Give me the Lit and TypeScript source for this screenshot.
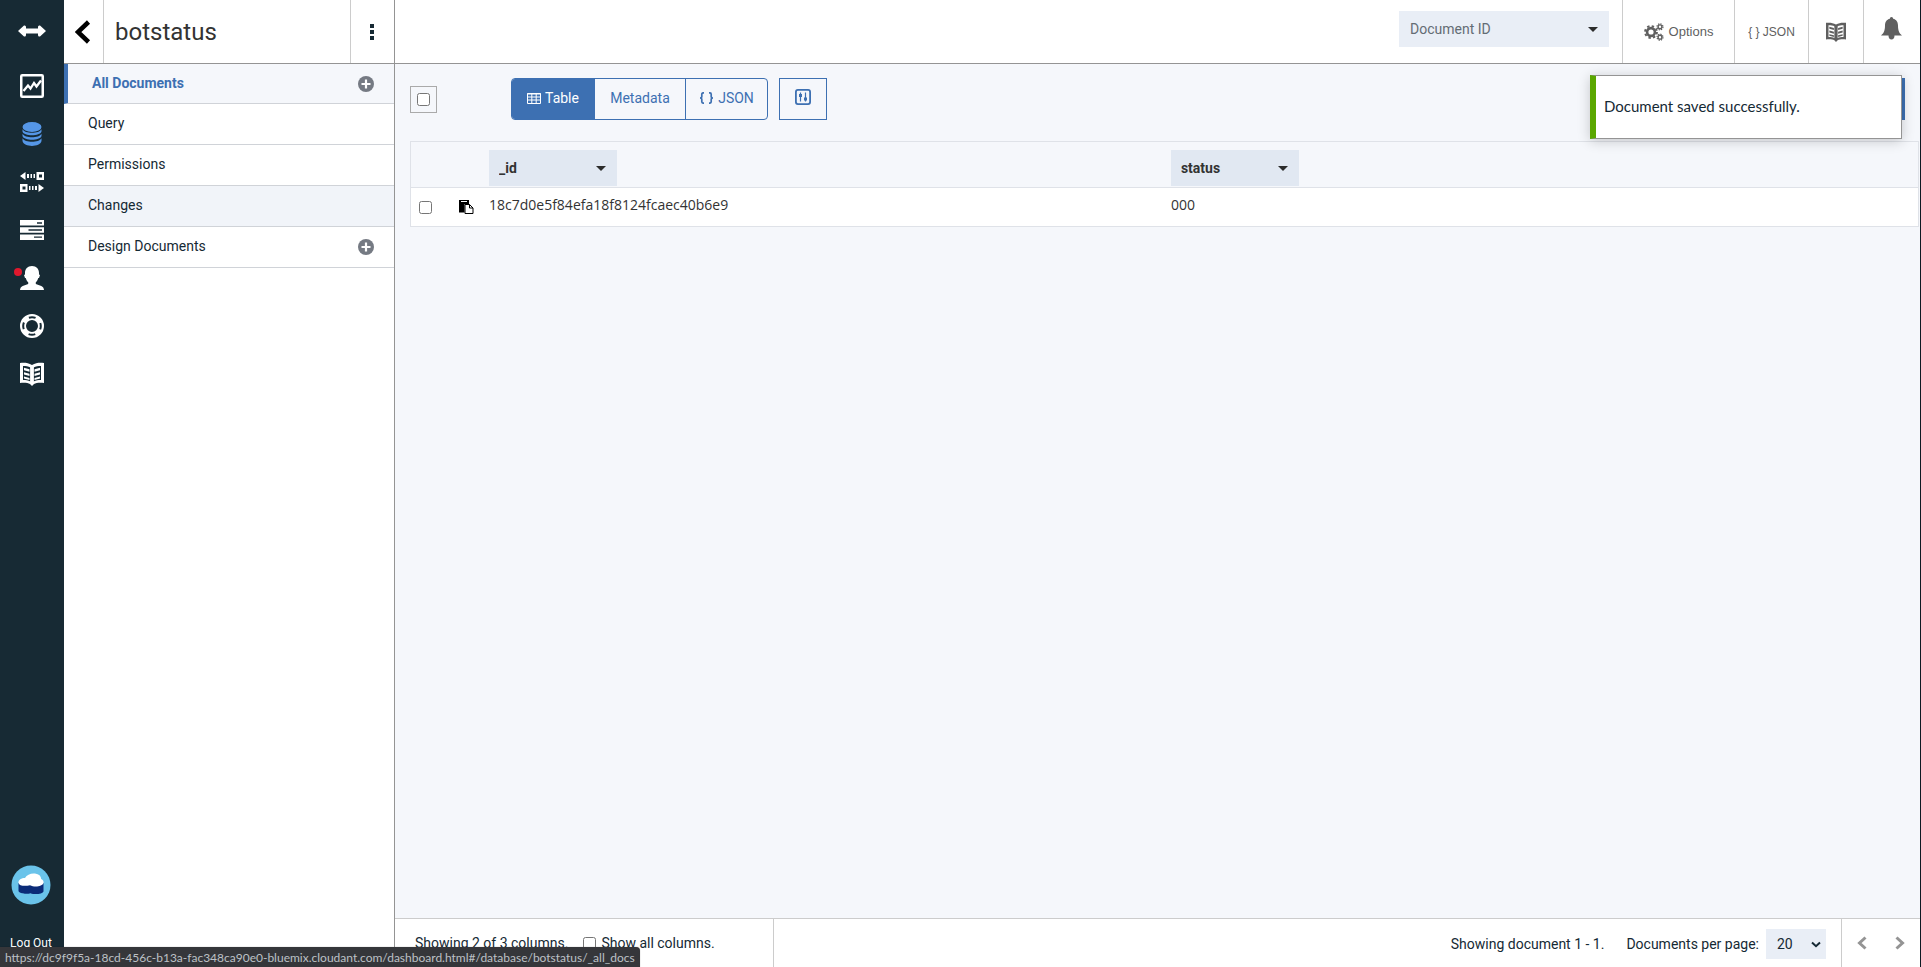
import { LitElement, html, css, svg } from 'lit';
import { customElement } from 'lit/decorators.js';
import { classMap } from 'lit/directives/class-map.js';

const bookPaths = svg`
  <path fill-rule="evenodd" d="M0 1 C4 .6 8 .6 12 3 C16 .6 20 .6 24 1 V21 C20 20.6 16 20.8 14 22 L12 24 L10 22 C8 20.8 4 20.6 0 21Z
  M3 4V18C6 18 8 18.2 10.500 19.500V5.400C8 4.200 6 4 3 4Z M21 4C18 4 16 4.200 13.500 5.400V19.500C16 18.200 18 18 21 18Z"/>
  <path d="M4 5.800l5.500 1.500v2.400l-5.500-1.500zM4 10.200l5.500 1.500v2.400l-5.500-1.500zM4 14.600l5.500 1.300v2l-5.500-1.300zM20 5.800l-5.500 1.500v2.400l5.500-1.500zM20 10.200l-5.500 1.500v2.400l5.500-1.500zM20 14.600l-5.500 1.300v2l5.500-1.300z"/>
  <path d="M10.200 4h3.600v17h-3.600z"/>`;

const icons = {
  expand: html`<svg width="28" height="24" viewBox="0 0 28 24"><path fill="#fff" d="M0 12 6 6.500Q8 6 8 8V9.500H20V8Q20 6 22 6.500L28 12 22 17.500Q20 18 20 16V14.500H8V16Q8 18 6 17.500Z"/></svg>`,
  chart: html`<svg width="24" height="24" viewBox="0 0 24 24" fill="none" stroke="#fff"><rect x="1.250" y="1.250" width="21.500" height="21.500" rx="1" stroke-width="2.500"/><path stroke-width="2.300" d="M3.500 17 8 11.500l2.500 3L14 9l2.500 3.500 4.500-6"/></svg>`,
  database: html`<svg width="20" height="24" viewBox="0 0 20 24"><ellipse cx="10" cy="5" rx="9.500" ry="5" fill="#5596e6"/><path fill="#5596e6" d="M.5 7.200C3 12 17 12 19.500 7.200V9.500C18 14.500 2 14.500.5 9.500ZM.5 11.700C3 16.500 17 16.500 19.500 11.700V14C18 19 2 19 .5 14ZM.5 16.200C3 21 17 21 19.500 16.200V19C18 25.500 2 25.500.5 19Z"/></svg>`,
  replication: html`<svg width="24" height="20" viewBox="0 0 24 20" fill="#fff"><path fill-rule="evenodd" d="M0 4 5.500 0V8ZM7 2h2v4H7zM10.500 2h1.500v4h-1.500zM13.500 2h1.500v4h-1.500zM16.500 0H24V8H16.500ZM19 2.500V5.500H22V2.500ZM24 16 18.500 12v8ZM15 14h2v4h-2zM12 14h1.500v4H12zM9 14h1.500v4H9zM0 12H7.500v8H0ZM2.500 14.500v3h3v-3Z"/></svg>`,
  tasks: html`<svg width="24" height="20" viewBox="0 0 24 20"><path fill="#fff" d="M0 0H24V5.500H0ZM0 7.200H24V12.700H0ZM0 14.400H24V20H0Z"/><path stroke="#172a34" stroke-width="1.300" d="M17 3h5M8.500 10H22M14 17.200h8"/></svg>`,
  user: html`<svg width="24" height="24" viewBox="0 0 24 24"><path fill="#fff" d="M12 0c4.500 0 7 3 7 7v1.500l1 .5-1 3h-.7c-.6 2-1.300 3.200-2.500 4.200V18l5.500 2c1.700.8 2.500 2.200 2.700 4H0c.2-1.800 1-3.200 2.700-4l5.500-2v-1.800C7 15.200 6.300 14 5.700 12H5L4 9l1-.5V7c0-4 2.500-7 7-7Z"/></svg>`,
  support: html`<svg width="24" height="24" viewBox="0 0 24 24" fill="none"><circle cx="12" cy="12" r="9" stroke="#fff" stroke-width="6"/><circle cx="12" cy="12" r="8.800" stroke="#172a34" stroke-width="2" stroke-dasharray="6.800 7.020" stroke-dashoffset="3.400"/></svg>`,
  docs: html`<svg width="24" height="24" viewBox="0 0 24 24" fill="#fff">${bookPaths}</svg>`,
  docsDark: html`<svg width="20" height="20" viewBox="0 0 24 24" fill="#5f5f5f">${bookPaths}</svg>`,
  logo: html`<svg width="40" height="40" viewBox="0 0 40 40"><circle cx="20" cy="20" r="19.500" fill="#6ac3ea"/><path fill="#0b2b78" d="M7.500 18V26c1 3 9 3.200 12 2.200 4 1.500 11.500 1.200 13-1.700V18Z"/><path fill="#fff" d="M7.500 18c-.3-3.500 3-5 6.500-5 2-3.500 6-5 10-4.500 4 .5 6 2.500 6.200 5.500 2 .8 2.600 2.300 2.300 4-1 3.500-9 4.500-13.500 2.200C14 21.500 8 21 7.500 18Z"/></svg>`,
  back: html`<svg width="16" height="24" viewBox="0 0 16 24"><path d="M13.500 2 3 12 13.500 22" fill="none" stroke="#000" stroke-width="4.500"/></svg>`,
  kebab: html`<svg width="6" height="16" viewBox="0 0 6 16"><path fill="#172a34" d="M1 0h4v4H1zM1 6h4v4H1zM1 12h4v4H1z"/></svg>`,
  plus: html`<svg width="16" height="16" viewBox="0 0 16 16"><circle cx="8" cy="8" r="8" fill="#757a83"/><path stroke="#fff" stroke-width="2.200" d="M8 3.500v9M3.500 8h9"/></svg>`,
  caret: html`<svg width="10" height="5" viewBox="0 0 10 5"><path fill="#2c2c2c" d="M0 0h10L5 5z"/></svg>`,
  gears: html`<svg width="20" height="18" viewBox="0 0 20 18" fill="none" stroke="#5f5f5f"><circle cx="7" cy="9" r="3.900" stroke-width="2.600"/><circle cx="7" cy="9" r="5.900" stroke-width="2" stroke-dasharray="2.400 2.234"/><circle cx="16" cy="3.800" r="1.900" stroke-width="1.400"/><circle cx="16" cy="3.800" r="3" stroke-width="1.200" stroke-dasharray="1.300 1.056"/><circle cx="16" cy="14.200" r="1.900" stroke-width="1.400"/><circle cx="16" cy="14.200" r="3" stroke-width="1.200" stroke-dasharray="1.300 1.056"/></svg>`,
  bell: html`<svg width="21" height="23" viewBox="0 0 21 23"><path fill="#5f5f5f" d="M10.500 0c1 0 1.600.7 1.600 1.800C15.500 2.500 17 5.300 17 8.500c0 5 1.200 7.700 4 10H13.500c0 2.500-1.200 4-3 4s-3-1.500-3-4H0c2.800-2.300 4-5 4-10 0-3.200 1.500-6 4.900-6.700C8.900.7 9.500 0 10.500 0Z"/></svg>`,
  grid: html`<svg width="14" height="11" viewBox="0 0 14 11"><path fill="none" stroke="currentColor" d="M.5.5h13v10H.5zM0 1h14M0 4h14M0 7h14M4.800 0v11M9.200 0v11"/></svg>`,
  braces: html`<svg width="15" height="12" viewBox="0 0 15 12"><path fill="none" stroke="currentColor" stroke-width="1.700" d="M5 .9H4Q2.800.9 2.800 2.200V4.500Q2.800 6 1 6 2.800 6 2.800 7.500V9.800Q2.800 11.100 4 11.100H5M10 .9h1Q12.200.9 12.200 2.200V4.500Q12.200 6 14 6 12.200 6 12.200 7.500V9.800Q12.200 11.100 11 11.100H10"/></svg>`,
  sliders: html`<svg width="16" height="16" viewBox="0 0 16 16"><rect x=".9" y=".9" width="14.200" height="14.200" rx="2" fill="none" stroke="#3d70b2" stroke-width="1.800"/><path stroke="#3d70b2" stroke-width="1.200" d="M5.500 3.500v9M10.500 3.500v9"/><path stroke="#3d70b2" stroke-width="3" d="M5.500 5v3M10.500 8.500v3"/></svg>`,
  clipboard: html`<svg width="15" height="14" viewBox="0 0 15 14"><path d="M0 0H10V4H5.500V12.500H0Z"/><path fill="#fff" d="M2 1h6v1H2z"/><path fill="#fff" stroke="#000" d="M6 4.500h4.500L14 8v5.500H6z"/><path fill="none" stroke="#000" d="M10.500 4.500V8H14"/></svg>`,
  prev: html`<svg width="10" height="14" viewBox="0 0 10 14"><path d="M8.500 1.500 2.500 7l6 5.500" fill="none" stroke="#949494" stroke-width="3"/></svg>`,
  next: html`<svg width="10" height="14" viewBox="0 0 10 14"><path d="M1.500 1.500 7.500 7l-6 5.500" fill="none" stroke="#949494" stroke-width="3"/></svg>`,
  chevron: html`<svg width="10" height="7" viewBox="0 0 10 7"><path d="M1 1.500 5 5.200 9 1.500" fill="none" stroke="#152934" stroke-width="2"/></svg>`,
};

const navLinks = [
  { icon: icons.chart, label: 'Monitoring' },
  { icon: icons.database, label: 'Databases' },
  { icon: icons.replication, label: 'Replication' },
  { icon: icons.tasks, label: 'Active Tasks' },
  { icon: icons.user, label: 'Account', alert: true },
  { icon: icons.support, label: 'Support' },
  { icon: icons.docs, label: 'Documentation' },
];

const sections = [
  { text: 'All Documents', active: true, add: true },
  { text: 'Query' },
  { text: 'Permissions' },
  { text: 'Changes', hover: true },
  { text: 'Design Documents', add: true },
];

const shared = css`
  *, *::before, *::after { box-sizing: border-box; }
  svg { display: block; flex: none; }
  a { color: inherit; text-decoration: none; }
  button, select, input { font: inherit; color: inherit; margin: 0; }
  button { border: 0; padding: 0; background: none; display: flex; align-items: center; justify-content: center; cursor: pointer; }
  .pick { display: grid; align-items: center; }
  .pick select, .pick svg { grid-area: 1 / 1; }
  .pick select { appearance: none; border: 0; border-radius: 0; width: 100%; height: 100%; background: #e9eef6; }
  .pick svg { justify-self: end; margin-right: 11px; pointer-events: none; }
`;

@customElement('side-nav')
export class SideNav extends LitElement {
  static styles = [shared, css`
    :host { display: flex; flex-direction: column; align-items: center; width: 64px; background: #172a34; color: #fff; font-size: 12px; }
    .toggle { height: 62px; width: 64px; }
    .links { display: flex; flex-direction: column; width: 100%; }
    .link { display: flex; align-items: center; justify-content: center; height: 48px; position: relative; }
    .alert::before { content: ''; position: absolute; left: 14px; top: 14px; width: 8px; height: 8px; border-radius: 50%; background: #e0182d; }
    .foot { margin-top: auto; display: flex; flex-direction: column; align-items: center; gap: 30px; padding: 0 2px 16px 0; line-height: 16px; }
  `];
  render() {
    return html`
      <button class="toggle" aria-label="Expand menu">${icons.expand}</button>
      <nav class="links">
        ${navLinks.map(l => html`<a class=${classMap({ link: true, alert: !!l.alert })} href="#" aria-label=${l.label}>${l.icon}</a>`)}
      </nav>
      <div class="foot">${icons.logo}<a href="#">Log Out</a></div>`;
  }
}

@customElement('database-panel')
export class DatabasePanel extends LitElement {
  static styles = [shared, css`
    :host { display: block; width: 331px; background: #fff; border-right: 1px solid #949494; color: #152934; }
    .head { display: flex; height: 64px; border-bottom: 1px solid #949494; }
    .back { width: 40px; padding-right: 1px; border-right: 1px solid #ccc; }
    .name { flex: 1; margin: 0; padding-left: 11px; font-size: 24px; font-weight: 400; line-height: 64px; color: #333; }
    .more { width: 44px; padding-right: 2px; border-left: 1px solid #ccc; }
    .list { list-style: none; margin: 0; padding: 0; }
    .item { display: flex; align-items: center; justify-content: space-between; height: 41px; padding: 0 20px 0 24px; border-bottom: 1px solid #d0d3d8; line-height: 20px; }
    .item a { padding-bottom: 2px; }
    .hover { background: #f1f4f9; }
    .active { height: 40px; background: #f5f7fb; color: #3d70b2; font-weight: 700; border-left: 4px solid #3d70b2; }
  `];
  render() {
    return html`
      <header class="head">
        <button class="back" aria-label="Back to databases">${icons.back}</button>
        <h1 class="name">botstatus</h1>
        <button class="more" aria-label="Database actions">${icons.kebab}</button>
      </header>
      <ul class="list">
        ${sections.map(s => html`<li class=${classMap({ item: true, active: !!s.active, hover: !!s.hover })}>
          <a href="#">${s.text}</a>
          ${s.add ? html`<button aria-label=${`Add to ${s.text}`}>${icons.plus}</button>` : ''}
        </li>`)}
      </ul>`;
  }
}

@customElement('top-bar')
export class TopBar extends LitElement {
  static styles = [shared, css`
    :host { display: flex; justify-content: flex-end; height: 64px; background: #fff; border-bottom: 1px solid #949494; color: #5f5f5f; font: 13px 'Liberation Sans', Arial, sans-serif; }
    .search { width: 210px; height: 36px; margin: 11px 13px 0 0; font: 14px Roboto, sans-serif; color: #646c74; }
    .search select { padding: 0 11px; }
    .tool { border-left: 1px solid #ccc; gap: 5px; }
    .options { width: 112px; }
    .json { width: 74px; font-size: 12px; }
    .help { width: 55px; }
    .bell { width: 57px; padding: 0 2px 6px 0; }
  `];
  render() {
    return html`
      <div class="pick search"><select aria-label="Document ID"><option>Document ID</option></select>${icons.caret}</div>
      <button class="tool options">${icons.gears}Options</button>
      <button class="tool json">{ } JSON</button>
      <button class="tool help" aria-label="Documentation">${icons.docsDark}</button>
      <button class="tool bell" aria-label="Notifications">${icons.bell}</button>`;
  }
}

@customElement('document-list')
export class DocumentList extends LitElement {
  static styles = [shared, css`
    :host { display: block; flex: 1; background: #f5f7fb; color: #333; }
    .bar { display: flex; align-items: center; padding: 14px 15px 0; height: 56px; }
    .all { display: flex; align-items: center; justify-content: center; width: 27px; height: 27px; border: 1px solid #aaa; }
    .box { width: 13px; height: 13px; }
    .views { display: flex; margin-left: 74px; height: 42px; border: 1px solid #3d70b2; border-radius: 4px; overflow: hidden; color: #3d70b2; }
    .view { width: 82px; gap: 4px; padding-bottom: 2px; }
    .view + .view { border-left: 1px solid #3d70b2; }
    .view.meta { width: 91px; }
    .view.on { background: #3d70b2; color: #fff; }
    .columns { width: 48px; height: 42px; margin-left: 11px; padding-bottom: 4px; border: 1px solid #3d70b2; }
    .create { width: 150px; height: 42px; margin-left: auto; background: #3d70b2; }
    .docs { width: calc(100% - 16px); margin: 21px 0 0 15px; table-layout: fixed; border-collapse: separate; border-spacing: 0; border: 1px solid #dfe2e8; border-bottom: 0; }
    .docs th, .docs td { padding: 0; border-bottom: 1px solid #dfe2e8; text-align: left; vertical-align: middle; }
    .docs th { height: 46px; padding-top: 7px; }
    .docs td { height: 39px; background: #fff; font-family: 'Open Sans', sans-serif; }
    .c-check { width: 48px; }
    .c-copy { width: 30px; }
    .c-id { width: 45.25%; }
    .docs .check { padding-left: 8px; }
    .line { display: flex; align-items: center; }
    .text { padding-bottom: 4px; line-height: 20px; }
    .pick { width: 128px; height: 36px; }
    .pick select { padding: 0 10px; background: #e1e8f2; font-weight: 700; }
  `];
  render() {
    return html`
      <div class="bar">
        <label class="all"><input class="box" type="checkbox" aria-label="Select all documents"></label>
        <div class="views">
          <button class="view on">${icons.grid}Table</button>
          <button class="view meta">Metadata</button>
          <button class="view">${icons.braces}JSON</button>
        </div>
        <button class="columns" aria-label="Query options">${icons.sliders}</button>
        <button class="create" aria-label="Create document"></button>
      </div>
      <table class="docs">
        <colgroup><col class="c-check"><col class="c-copy"><col class="c-id"><col></colgroup>
        <thead><tr>
          <th></th><th></th>
          ${['_id', 'status'].map(n => html`<th><div class="pick"><select aria-label="Column"><option>${n}</option></select>${icons.caret}</div></th>`)}
        </tr></thead>
        <tbody><tr>
          <td class="check"><div class="line"><input class="box" type="checkbox" aria-label="Select document"></div></td>
          <td><button aria-label="Copy document ID">${icons.clipboard}</button></td>
          <td><div class="text">18c7d0e5f84efa18f8124fcaec40b6e9</div></td>
          <td><div class="text">000</div></td>
        </tr></tbody>
      </table>`;
  }
}

@customElement('page-footer')
export class PageFooter extends LitElement {
  static styles = [shared, css`
    :host { display: flex; align-items: stretch; height: 49px; border-top: 1px solid #ccc; background: #fff; color: #152934; line-height: 20px; }
    .left { display: flex; align-items: center; gap: 15px; width: 379px; padding-left: 20px; border-right: 1px solid #ccc; }
    .show { display: flex; align-items: center; gap: 5px; }
    .box { width: 13px; height: 13px; }
    .right { flex: 1; display: flex; align-items: center; justify-content: flex-end; padding-top: 2px; }
    .per { display: flex; align-items: center; gap: 7px; margin-left: 22px; }
    .pick { width: 60px; height: 30px; margin-right: 15px; }
    .pick select { padding: 0 11px; }
    .pick svg { margin-right: 5px; }
    .pager { display: flex; align-items: center; gap: 28px; padding: 0 15px; border-left: 1px solid #ccc; }
  `];
  render() {
    return html`
      <div class="left">
        <span>Showing 2 of 3 columns.</span>
        <label class="show"><input class="box" type="checkbox">Show all columns.</label>
      </div>
      <div class="right">
        <span>Showing document 1 - 1.</span>
        <div class="per"><label for="per">Documents per page:</label>
          <div class="pick"><select id="per"><option>20</option></select>${icons.chevron}</div>
        </div>
      </div>
      <div class="pager">
        <button aria-label="Previous page">${icons.prev}</button>
        <button aria-label="Next page">${icons.next}</button>
      </div>`;
  }
}

@customElement('app-root')
export class AppRoot extends LitElement {
  static styles = [shared, css`
    :host { display: flex; position: relative; min-height: 100vh; border-right: 1px solid #0c1a22; overflow: hidden; font: 14px Roboto, sans-serif; }
    .main { flex: 1; min-width: 0; display: flex; flex-direction: column; }
    .toast { position: absolute; top: 75px; right: 18px; width: 312px; height: 64px; padding: 0 0 2px 8px; display: flex; align-items: center; background: #fff; border: 1px solid #949494; border-left: 6px solid #5aa700; box-shadow: 0 2px 12px rgba(0, 0, 0, .2); color: #152934; font-family: Lato, sans-serif; font-size: 15px; }
    .status { position: absolute; left: 0; bottom: 0; height: 20px; padding: 0 5px; line-height: 22px; background: #35363a; border-top-right-radius: 4px; color: #bdc1c6; font-family: Lato, sans-serif; font-size: 12px; box-shadow: 0 0 1px rgba(0, 0, 0, .5); }
  `];
  render() {
    return html`
      <side-nav></side-nav>
      <database-panel></database-panel>
      <main class="main">
        <top-bar></top-bar>
        <document-list></document-list>
        <page-footer></page-footer>
      </main>
      <div class="toast" role="status">Document saved successfully.</div>
      <div class="status">https://dc9f9f5a-18cd-456c-b13a-fac348ca90e0-bluemix.cloudant.com/dashboard.html#/database/botstatus/_all_docs</div>`;
  }
}
